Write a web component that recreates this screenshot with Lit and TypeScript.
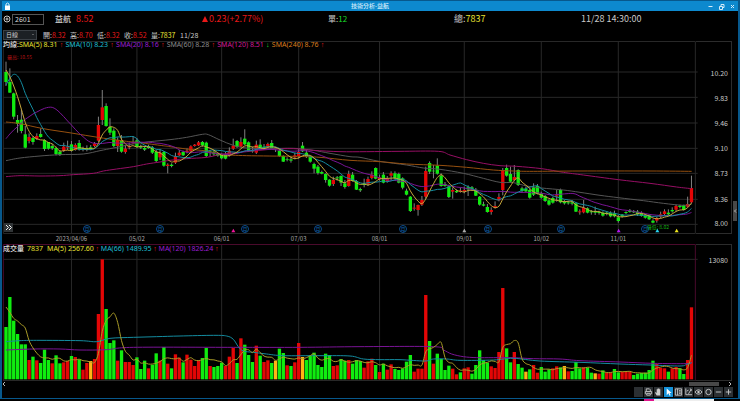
import { LitElement, html, css, svg } from "lit";
import { customElement } from "lit/decorators.js";

// Plot units: three per pixel at the default window width.
const LEFT = 9;
const WIDTH = 2079;
const FIRST = 18;
const STEP = 11.553;
const xOf = (i: number) => FIRST + STEP * i;
const pct = (x: number) => `${((x - LEFT) / WIDTH) * 100}%`;

// high, body top, body bottom, low, direction
const CANDLES = `35 66 96 108 g,55 96 128 128 g,128 130 200 208 g,195 210 222 248 g,178 209 243 250 g,228 253 293 295 g,250 261 273 280 r,258 264 276 284 g,250 258 267 270 r,235 252 261 263 g,
268 270 297 303 g,276 276 296 299 g,282 288 295 300 g,290 294 312 316 g,300 305 315 318 g,278 290 302 306 r,272 290 293 300 r,273 283 302 305 g,280 285 300 302 r,270 279 299 302 g,
290 294 298 304 g,286 294 299 304 g,285 292 297 301 g,276 281 288 292 r,200 225 272 276 r,120 172 210 225 r,160 168 228 230 g,205 230 248 255 g,235 242 288 292 g,262 270 288 306 r,
255 270 305 308 g,285 296 306 311 r,278 288 292 298 r,258 276 280 282 r,264 271 291 293 g,284 289 293 297 g,288 294 299 303 g,284 288 294 296 g,288 292 308 312 g,300 306 333 336 g,
298 308 322 330 r,303 306 347 350 g,340 344 348 370 r,340 344 348 352 g,308 318 338 342 r,300 308 316 318 r,302 306 316 318 g,295 302 306 310 r,286 289 304 310 r,282 284 288 290 r,
273 277 286 288 r,273 276 286 290 g,275 278 318 322 g,300 304 308 320 g,300 305 313 318 g,308 312 317 320 g,310 315 325 328 g,306 314 326 328 g,292 302 315 320 r,266 287 296 300 r,
270 273 291 294 g,262 276 290 292 r,238 266 283 285 g,274 277 302 305 g,290 300 304 308 g,272 284 308 312 r,268 284 294 298 g,282 290 296 298 g,278 282 292 294 r,270 279 294 296 g,
290 294 296 306 g,294 302 318 320 g,316 318 335 336 g,322 327 329 334 g,320 328 332 338 g,308 316 322 328 r,296 306 318 326 r,276 287 304 306 g,300 308 320 324 g,318 321 335 338 g,
338 342 356 370 g,345 350 369 374 g,362 366 371 373 g,370 372 390 398 g,388 389 407 410 g,380 390 402 408 r,378 382 385 392 g,376 378 398 408 g,390 400 411 416 g,362 372 408 410 r,
366 374 393 395 g,390 393 419 420 g,413 417 421 426 g,386 401 405 412 g,380 387 402 408 r,364 374 384 388 r,352 354 386 388 g,374 382 388 392 r,366 374 398 400 g,378 386 394 398 r,
364 370 377 390 r,364 370 385 388 g,368 372 398 400 g,382 385 413 418 g,416 422 434 436 g,438 440 483 486 g,460 473 476 482 r,464 465 480 497 r,438 450 464 468 r,350 363 440 446 r,
334 339 365 372 g,345 362 364 385 g,325 347 371 374 g,370 377 408 410 g,396 402 408 410 g,404 409 441 444 g,412 420 425 446 r,418 423 427 429 g,412 422 426 428 r,410 420 424 430 r,
406 412 418 438 g,408 412 418 422 g,414 419 437 438 g,438 440 464 467 g,455 463 467 469 g,462 471 486 488 g,472 480 486 494 r,454 468 473 476 r,430 441 451 454 r,354 360 420 436 r,
344 354 377 380 g,350 372 395 398 g,345 381 390 394 r,358 360 405 408 g,410 415 423 427 g,410 416 424 428 g,415 420 443 446 g,400 412 434 438 g,402 408 431 433 g,425 430 443 446 g,
435 438 453 456 g,448 451 464 467 g,440 444 458 461 g,420 436 440 455 r,416 420 457 460 g,450 456 460 464 g,452 457 460 464 g,450 457 461 466 g,458 460 485 486 g,478 484 487 494 r,
450 474 487 490 r,472 475 488 490 g,480 484 487 494 g,470 483 488 495 g,482 485 489 494 g,484 488 497 500 g,484 488 492 496 g,484 489 499 502 g,482 490 499 502 g,495 502 513 518 g,
492 494 499 503 g,484 486 489 492 g,477 482 486 488 g,480 484 487 489 g,480 485 493 498 g,484 489 498 500 g,492 497 503 506 g,493 496 508 510 g,508 512 518 520 g,500 504 512 518 r,
485 493 500 504 r,478 484 492 496 r,478 488 493 496 g,472 480 484 488 g,464 468 479 484 r,464 467 471 475 g,464 466 480 482 g,440 462 470 472 r,377 414 457 460 r`
  .split(",")
  .map((row) => {
    const [h, t, b, l, d] = row.trim().split(" ");
    return { h: +h, t: +t, b: +b, l: +l, d };
  });

const VOLUMES = `306g 216g 287g 327g 358g 358g 405r 395g 406r 414g 374g 405g 415r 391g 415g 412r 408r 393g 396r 404g
434r 414r 408y 402r 267r 103r 252g 354g 346g 407r 376g 411r 411r 420r 397g 432g 407g 430r 419g 385g
407r 366g 416r 430g 388r 398r 412g 389r 404r 423r 406r 399g 369g 423r 426g 423g 413g 423r 395r 369r
414g 340r 359g 390g 411g 362r 392g 411r 406r 414g 407y 371g 384g 421r 423g 412r 354r 396y 405g 393g
383g 420g 426g 386g 390g 423r 421r 402g 407g 405r 416g 405g 408g 428r 409r 401r 420g 441r 416g 434r
418r 432g 435g 430g 410g 390g 440r 431r 431r 210r 348g 416r 386g 402g 435g 422g 431r 448r 442g 430r
427r 446g 420g 376g 405g 413g 424r 429r 381r 189r 370g 412g 381r 417g 428g 440y 433g 420r 443r 426g
440g 433g 430r 424r 427g 423y 439r 438g 411g 430g 427r 428g 443g 445y 446r 436g 443r 443r 432g 442g
441r 440r 440r 450g 446g 444g 443g 435g 407g 417r 429r 430r 440g 430r 426r 430g 447g 405r 247r`
  .split(/\s+/)
  .map((v) => ({ y: parseInt(v), c: v.slice(-1) }));

type Point = [number, number];
const points = (s: string) => s.split(" ").map((p) => p.split(",").map(Number) as Point);

const average = (values: number[], n: number, seed: number[]): Point[] =>
  values.map((_, i) => {
    if (i < seed.length) return [xOf(i), seed[i]];
    const w = values.slice(Math.max(0, i - n + 1), i + 1);
    return [xOf(i), w.reduce((a, b) => a + b, 0) / w.length];
  });

// Catmull-Rom spline through the given points
const smooth = (p: Point[]) => {
  let d = `M${p[0][0]} ${p[0][1]}`;
  for (let i = 0; i < p.length - 1; i++) {
    const a = p[i - 1] ?? p[i];
    const b = p[i];
    const c = p[i + 1];
    const e = p[i + 2] ?? c;
    d += `C${b[0] + (c[0] - a[0]) / 6} ${b[1] + (c[1] - a[1]) / 6} ${c[0] - (e[0] - b[0]) / 6} ${c[1] - (e[1] - b[1]) / 6} ${c[0]} ${c[1]}`;
  }
  return d;
};

const closes = CANDLES.map((c) => (c.d === "g" ? c.b : c.t));
const PRICE_LINES = [
  { cls: "sma60", p: points("18,332 60,324 120,318 180,314 250,312 300,302 340,294 400,282 450,275 510,269 560,262 607,253 625,254 660,270 700,286 740,294 810,296 880,295 940,301 990,310 1050,320 1080,322 1138,334 1220,345 1270,354 1320,358 1390,370 1450,385 1500,397 1540,398 1580,408 1625,414 1690,420 1740,427 1800,436 1855,443 1930,452 1990,460 2050,466 2075,462") },
  { cls: "sma120", p: points("18,380 60,377 120,378 180,377 220,374 280,370 310,363 350,357 400,350 440,342 480,336 510,331 560,326 620,322 670,312 740,305 810,298 880,296 940,301 1020,305 1100,305 1200,304 1315,304 1350,315 1400,329 1450,340 1500,347 1550,349 1625,356 1690,367 1750,375 1855,389 1950,400 2030,411 2075,416") },
  { cls: "sma240", p: points("18,216 60,221 130,236 214,249 300,263 380,274 411,277 480,286 510,290 560,297 620,303 665,313 740,317 880,319 960,322 1050,331 1140,335 1220,342 1320,346 1400,352 1480,360 1540,363 1600,364 1740,363 1950,363 2075,364") },
  { cls: "sma20", p: average(closes, 20, [266, 252, 240, 230, 219, 208, 200, 192, 186, 180, 175, 172, 172, 178, 188, 200, 213, 225, 238, 250, 260, 270, 277, 280, 281]) },
  { cls: "sma10", p: average(closes, 10, [105, 85, 73, 78, 98, 130, 155, 178, 203]) },
  { cls: "sma5", p: average(closes, 5, [60, 80, 108, 140]) },
];
const VOLUME_LINES = [
  { cls: "sma20", p: points("18,375 100,372 180,372 240,375 320,374 400,367 700,367 900,367 1080,365 1300,365 1330,375 1355,387 1390,395 1430,398 1480,398 1540,398 1600,401 1680,402 1740,407 1860,411 1960,415 2060,416 2075,413") },
  { cls: "sma10", p: points("18,350 60,347 110,346 240,347 290,350 330,340 400,337 470,335 540,333 640,331 680,333 700,343 715,365 730,378 760,382 800,387 850,392 960,392 1050,393 1090,402 1140,404 1200,404 1275,408 1300,402 1340,402 1380,406 1480,405 1540,400 1620,408 1740,412 1860,417 1950,420 2040,423 2060,418 2075,413") },
  { cls: "volume5", p: average(VOLUMES.map((v) => v.y), 5, [246, 262, 280, 288]) },
];

const MONTHS: [number, string][] = [
  [17, "2023/04/06"], [34, "05/02"], [56, "06/01"], [76, "07/03"],
  [97, "08/01"], [119, "09/01"], [139, "10/02"], [159, "11/01"],
];
const PRICES: [number, string][] = [
  [66, "10.20"], [142, "9.83"], [219, "9.46"], [295, "9.10"], [370, "8.73"], [448, "8.36"], [523, "8.00"],
];
const BADGES = [261, 480, 735, 954, 1209, 1463, 1683, 1936];
const MARKS: [number, string][] = [
  [700, "#f0149c"], [1393, "#aaa"], [1856, "#b414f0"], [1972, "#28d2f0"], [2030, "#f0e61e"],
];
const PRICE_TOP = -27;
const PRICE_H = 579;

const PRICE_LEGEND: [string, string, boolean][] = [
  ["y", "SMA(5) 8.31", true], ["c", "SMA(10) 8.23", true], ["p", "SMA(20) 8.16", true],
  ["s", "SMA(60) 8.28", true], ["m", "SMA(120) 8.51", false], ["o", "SMA(240) 8.76", true],
];
const VOLUME_LEGEND: [string, string, boolean][] = [
  ["y", "MA(5) 2567.60", true], ["c", "MA(66) 1489.95", true], ["p", "MA(120) 1826.24", true],
];
const QUOTES: [string, string, string][] = [
  ["開:", "8.32", "r"], ["高:", "8.70", "r"], ["低:", "8.32", "r"], ["收:", "8.52", "r"], ["量:", "7837", "y"],
];

const TOOLS: [string, unknown][] = [
  ["空白", ""],
  ["列印", svg`<path d="M2.5 4V1.5h3.5l1 1V4M2 7H1.5V4.5h7V7H8M3 6.5h4v2H3z"/>`],
  ["移動", svg`<path class="solid" d="M3 9 1 5.5l1-.3 1 1V2h1v2.5V1h1v3.5V1h1v3.5V2h1v4.5L7 9z"/>`],
  ["選取", svg`<path class="solid" d="M3 1v7.5l2-2 1.2 2.8 1.2-.6L6.200 6H8.5z"/>`],
  ["資訊", svg`<path d="M1.5 1.5h7v7h-7zM4 1.5v7M5.5 3.5h2M5.5 5h2M5.5 6.5h2"/>`],
  ["畫線", svg`<path d="M2 1v7h7M3 4l2-1M5 7l3-5M6.5 1.5 8 2v2"/>`],
  ["顯示", svg`<path d="M1 5q4-5 8 0q-4 5-8 0z"/><circle class="solid" cx="5" cy="5" r="1.3"/>`],
  ["重設", svg`<circle cx="5" cy="5" r="3"/>`],
  ["縮小", svg`<path d="M2 5h6"/>`],
  ["放大", svg`<path d="M2 5h6M5 2v6"/>`],
];

@customElement("app-root")
export class AppRoot extends LitElement {
  static styles = css`
    :host {
      display: block;
      background: #000;
      color: #c8c8c8;
      font-family: "Noto Sans CJK TC", "Noto Sans", sans-serif;
      font-size: 7px;
      line-height: 10px;
    }
    * { box-sizing: border-box; }
    .window { border: solid #07588c; border-width: 1px 2px 0; }
    button { margin: 0; padding: 0; border: 0; background: none; color: inherit; font: inherit; display: block; }
    svg { display: block; }
    .title {
      display: grid;
      grid-template-columns: 1fr auto 1fr;
      align-items: center;
      height: 10px;
      padding: 0 2px;
      background: #0d89ce;
      color: #d4ecfa;
    }
    .title h1 { margin: 0; font-size: 6px; line-height: 10px; font-weight: 500; }
    .controls { display: flex; justify-content: flex-end; gap: 4px; }
    .line { fill: none; stroke: currentColor; }
    .header {
      display: grid;
      grid-template-columns: 200fr 126fr 126fr 127fr 157fr;
      align-items: center;
      height: 16px;
      font-size: 9px;
    }
    .symbol { display: flex; align-items: center; padding-left: 1px; }
    .symbol input {
      width: 32px;
      height: 11px;
      margin: 0 11px 0 1px;
      padding: 0 2px;
      border: 1px solid #555;
      background: #000;
      color: #ddd;
      font: inherit;
      font-size: 7px;
    }
    .name { font-size: 8px; font-weight: 500; margin-right: 5px; }
    .small { font-size: 8px; }
    .change { display: flex; align-items: center; }
    .r { color: #e81818; }
    .g { color: #18dc28; }
    .y { color: #e8e032; }
    .c { color: #1ebed2; }
    .p { color: #9a1ed2; }
    .s { color: #8c8c8c; }
    .m { color: #d21896; }
    .o { color: #dc7d1e; }
    .quotes { display: flex; align-items: center; height: 14px; padding: 2px 0 0 1px; }
    .quotes select {
      display: block;
      width: 34px;
      height: 10px;
      margin-right: 6px;
      padding: 0 0 0 2px;
      border: 1px solid #3a3f44;
      border-radius: 0;
      background: #1c2024;
      color: #ccc;
      font: inherit;
      font-size: 6px;
      line-height: 8px;
      appearance: none;
    }
    .pick { position: relative; display: block; }
    .pick::after {
      content: "";
      position: absolute;
      right: 9px;
      top: 4px;
      border: 1px solid transparent;
      border-top-color: #999;
    }
    .quote { min-width: 27px; }
    .last { padding-left: 2px; }
    .body { display: grid; grid-template-columns: 1fr 6px; align-items: center; padding-left: 1px; }
    .charts { display: grid; grid-template-columns: 1fr 36px; }
    .plot { position: relative; min-width: 0; }
    .plot > svg { width: 100%; overflow: visible; }
    .price > svg { height: 193px; }
    .volume > svg { height: 137px; }
    .scale { position: relative; border: solid #2c2c2c; border-width: 1px 1px 1px 0; text-align: right; }
    .scale span { position: absolute; right: 3px; transform: translateY(-50%); }
    .legend { position: absolute; top: -1px; left: 0; display: flex; white-space: nowrap; font-family: "Noto Sans", "Noto Sans CJK TC", sans-serif; }
    .volume .legend { top: 0; }
    .legend b { font-weight: 500; color: #ddd; }
    .total { margin: 0 4px 0 3px; }
    .arrow { width: 8px; text-align: center; font-family: "Liberation Sans", sans-serif; }
    .volume .arrow { width: 7px; }
    .dates { position: relative; height: 10px; font-size: 6px; }
    .dates span { position: absolute; transform: translateX(-50%); color: #aaa; }
    .grid { stroke: #282828; stroke-width: 3; fill: none; }
    .frame { stroke: #4a0a2c; stroke-width: 3; fill: none; }
    .wick { stroke: #808080; stroke-width: 3; }
    .fill-r { fill: #e40606; }
    .fill-g { fill: #10ec10; }
    .fill-y { fill: #ffb414; }
    .curve { fill: none; stroke-width: 3; }
    .sma5 { stroke: #c8a83c; }
    .sma10 { stroke: #148ca0; }
    .sma20 { stroke: #7a1496; }
    .sma60 { stroke: #555; }
    .sma120 { stroke: #960f64; }
    .sma240 { stroke: #96500f; }
    .volume5 { stroke: #aa9c28; }
    .badge {
      position: absolute;
      width: 8px;
      height: 8px;
      border: 1px solid #0b4d8c;
      border-radius: 50%;
      color: #1266b4;
      font-size: 5px;
      line-height: 6px;
      text-align: center;
      transform: translate(-50%, -50%);
    }
    .tip { position: absolute; font-size: 5px; line-height: 6px; white-space: nowrap; }
    .high { left: 4px; top: 13px; color: #b01414; }
    .low { right: 27px; bottom: 4px; color: #14b414; }
    .expand { position: absolute; left: 1px; bottom: 2px; width: 9px; height: 9px; background: #303436; color: #eee; }
    .side { width: 4px; height: 20px; background: #484848; color: #bbb; justify-self: center; }
    .scroll { display: flex; align-items: center; justify-content: flex-end; gap: 9px; height: 6px; padding-right: 6px; color: #bbb; }
    .track { flex: 1; display: flex; justify-content: flex-end; }
    .thumb { width: 30px; height: 4px; background: #484848; }
    .tools { display: flex; justify-content: flex-end; gap: 1px; height: 11px; padding-right: 5px; }
    .tools button { width: 9px; height: 10px; background: #2b2f32; color: #ccc; }
    .tools .on { background: #1491d8; color: #fff; }
    .tools path, .tools circle { fill: none; stroke: currentColor; }
    .tools .solid { fill: currentColor; stroke: none; }
    .edge { display: flex; justify-content: flex-end; height: 3px; padding-right: 26px; background: #000; border-top: 1px solid #07588c; }
    .tab { width: 10px; background: #e0148c; }
    .strip { width: 60px; background: #eee; }
  `;

  private legend(items: [string, string, boolean][]) {
    return items.map(
      ([c, t, up]) => html`<span class=${c}>${t}</span><span class="arrow ${up ? "r" : "g"}">${up ? "↑" : "↓"}</span>`,
    );
  }

  private columns(top: number, bottom: number) {
    return MONTHS.map(([i]) => svg`<path class="grid" d="M${xOf(i)} ${top}V${bottom}"/>`);
  }

  private curves(lines: { cls: string; p: Point[] }[]) {
    return lines.map((l) => svg`<path class="curve ${l.cls}" d=${smooth(l.p)}/>`);
  }

  private priceChart() {
    return html`
      <div class="plot price">
        <svg viewBox="9 -27 2079 579" preserveAspectRatio="none" role="img" aria-label="日線">
          <path class="grid" d="M10 -25.5H2086V550.5H10Z" />
          ${this.columns(-25, 550)}
          ${PRICES.map(([y]) => svg`<path class="grid" d="M9 ${y}H2093"/>`)}
          ${CANDLES.map(
            (k, i) => svg`<path class="wick" d="M${xOf(i)} ${k.h}V${k.l}"/>
              <rect class="fill-${k.d}" x=${xOf(i) - 5} y=${k.t} width="10" height=${k.b - k.t}/>`,
          )}
          ${this.curves(PRICE_LINES)}
          ${MARKS.map(([x, c]) => svg`<path d="M${x - 6} 547h12l-6-11z" fill=${c}/>`)}
        </svg>
        <div class="legend"><b>均線:</b>${this.legend(PRICE_LEGEND)}</div>
        <span class="tip high">最高: 10.55</span>
        <span class="tip low">最低: 8.02</span>
        ${BADGES.map((x) => html`<span class="badge" style="left:${pct(x)};top:${((536 - PRICE_TOP) / PRICE_H) * 100}%">月</span>`)}
        <button class="expand" aria-label="展開">
          <svg width="9" height="9"><path class="line" d="M2 2l2.5 2.5L2 7M5 2l2.5 2.5L5 7" /></svg>
        </button>
      </div>
      <div class="scale">
        ${PRICES.map(([y, t]) => html`<span style="top:${((y - PRICE_TOP) / PRICE_H) * 100}%">${t}</span>`)}
      </div>
    `;
  }

  private volumeChart() {
    return html`
      <div class="plot volume">
        <svg viewBox="9 57 2079 411" preserveAspectRatio="none" role="img" aria-label="成交量">
          ${this.columns(60, 466)}
          <path class="grid" d="M9 103H2093M9 466.5H2088" />
          <path class="frame" d="M10 466V58.5H2086V466" />
          ${VOLUMES.map((v, i) => svg`<rect class="fill-${v.c}" x=${xOf(i) - 5} y=${v.y} width="10" height=${463 - v.y}/>`)}
          ${this.curves(VOLUME_LINES)}
        </svg>
        <div class="legend"><b>成交量</b><span class="total y">7837</span>${this.legend(VOLUME_LEGEND)}</div>
      </div>
      <div class="scale"><span style="top:${((103 - 57) / 411) * 100}%">13080</span></div>
    `;
  }

  render() {
    return html`
      <div class="window">
        <header class="title">
          <svg width="7" height="8"><path d="M1 3.5h5V8H1z" fill="#fff" /><path class="line" d="M2 4V2q1.5-2 3 0v2" /></svg>
          <h1>技術分析-益航</h1>
          <div class="controls">
            <button aria-label="最小化"><svg width="7" height="7"><path class="line" d="M1.5 3.5h4" /></svg></button>
            <button aria-label="還原"><svg width="7" height="7"><path class="line" d="M1.5 3.5h3v3h-3zM3 3V1.5h3v3H5" /></svg></button>
            <button aria-label="關閉"><svg width="7" height="7"><path class="line" d="M2 2l3 3M5 2L2 5" /></svg></button>
          </div>
        </header>
        <div class="header">
          <div class="symbol">
            <button aria-label="新增">
              <svg width="8" height="8"><circle class="line" cx="4" cy="4" r="3" /><path class="line" d="M2.5 4h3M4 2.5v3" /></svg>
            </button>
            <input aria-label="股票代號" .value=${"2601"} />
            <span class="name">益航</span><span class="r">8.52</span>
          </div>
          <span class="change r"><svg width="7" height="6"><path d="M0 6h6L3 0z" fill="currentColor" /></svg>0.23(+2.77%)</span>
          <span class="small">單:<span class="g">12</span></span>
          <span>總:<span class="y">7837</span></span>
          <time>11/28 14:30:00</time>
        </div>
        <div class="quotes">
          <label class="pick"><select aria-label="週期"><option>日線</option></select></label>
          ${QUOTES.map(([k, v, c]) => html`<span class="quote">${k}<span class=${c}>${v}</span></span>`)}
          <time class="last">11/28</time>
        </div>
        <main class="body">
          <div class="charts">
            ${this.priceChart()}
            <div class="dates">${MONTHS.map(([i, t]) => html`<span style="left:${pct(xOf(i))}">${t}</span>`)}</div>
            <div></div>
            ${this.volumeChart()}
          </div>
          <button class="side" aria-label="側欄"><svg width="4" height="20"><path class="line" d="M3 8.5L1.5 10L3 11.5" /></svg></button>
        </main>
        <div class="scroll">
          <svg width="4" height="6"><path class="line" d="M3 1L1 3l2 2" /></svg>
          <div class="track"><div class="thumb"></div></div>
          <svg width="4" height="6"><path class="line" d="M1 1l2 2-2 2" /></svg>
        </div>
        <div class="tools">
          ${TOOLS.map(([n, icon], i) => html`<button class=${i === 3 ? "on" : ""} aria-label=${n}><svg viewBox="0 0 10 10" width="9" height="10">${icon}</svg></button>`)}
        </div>
      </div>
      <div class="edge"><div class="tab"></div><div class="strip"></div></div>
    `;
  }
}
